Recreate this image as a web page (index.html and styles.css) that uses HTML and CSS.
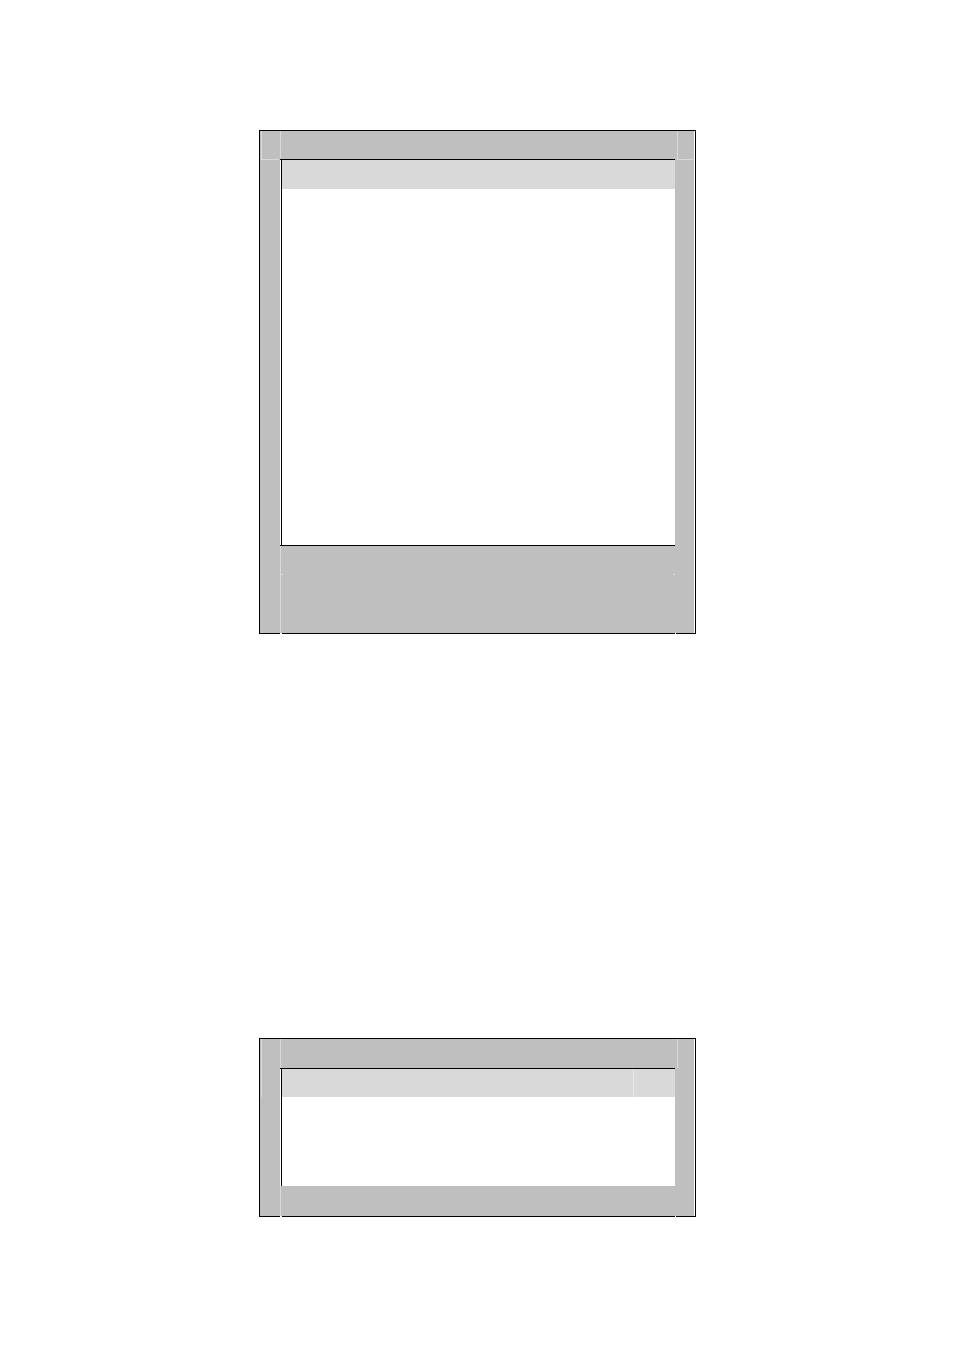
FILE: index.html
```
<!DOCTYPE html>
<html lang="en">
<head>
    <meta charset="UTF-8">
    <meta name="viewport" content="width=device-width, initial-scale=1.0">
    <title>Windows</title>
    <link rel="stylesheet" href="styles.css">
</head>
<body>
    <main class="page">
        <!-- Large window -->
        <section class="window window-large">
            <div class="corner corner-left"></div>
            <div class="title"></div>
            <div class="corner corner-right"></div>
            <div class="screen">
                <div class="screen-header"></div>
                <div class="screen-body"></div>
            </div>
            <div class="footer"></div>
        </section>

        <!-- Small window -->
        <section class="window window-small">
            <div class="corner corner-left"></div>
            <div class="title"></div>
            <div class="corner corner-right"></div>
            <div class="screen">
                <div class="screen-header">
                    <div class="header-cell"></div>
                </div>
                <div class="screen-body"></div>
            </div>
            <div class="footer"></div>
        </section>
    </main>
</body>
</html>
```
FILE: styles.css
```
* {
    margin: 0;
    padding: 0;
    box-sizing: border-box;
}

body {
    background-color: #ffffff;
}

.page {
    display: flex;
    flex-direction: column;
    align-items: center;
    gap: 404px;
    padding: 130px 0 130px 1px;
}

.window {
    display: grid;
    grid-template-columns: 20px 1fr 19px;
    width: 100%;
    max-width: 437px;
    border: 1px solid #000000;
    background-color: #bfbfbf;
    box-shadow: inset -1px 0 #ffffff;
    padding-right: 1px;
}

.window-large {
    grid-template-rows: 29px auto 88px;
}

.window-small {
    grid-template-rows: 30px auto 30px;
}

/* Corners */
.corner {
    border-left: 1px solid #d9d9d9;
}

.corner-left {
    margin: 0 1px;
}

.corner-right {
    margin: 0 1px 0 2px;
}

.window-large .corner {
    border-bottom: 1px solid #d9d9d9;
}

.window-small .corner-left {
    grid-row: 1 / 3;
    grid-column: 1;
    margin-bottom: 89px;
}

.window-small .corner-right {
    margin-bottom: 1px;
}

.title {
    grid-column: 2;
    box-shadow: inset 0 -1px #000000, inset 1px 0 #d9d9d9;
}

/* Screen */
.screen {
    grid-column: 2;
    border-left: 1px solid #ffffff;
    background-color: #ffffff;
}

.screen-header {
    display: flex;
    justify-content: flex-end;
    height: 29px;
    border-left: 1px solid #000000;
    background-color: #d9d9d9;
}

.screen-body {
    height: 356px;
    border-left: 1px solid #000000;
}

.window-small .screen-header {
    height: 28px;
}

.window-small .screen-body {
    height: 89px;
}

.header-cell {
    width: 42px;
    border-left: 1px solid #e6e6e6;
}

/* Footer */
.footer {
    position: relative;
    grid-column: 2;
    box-shadow: inset 1px 0 #d9d9d9;
}

.window-large .footer {
    box-shadow: inset 0 1px #000000, inset 1px 0 #d9d9d9;
    background: linear-gradient(#d9d9d9, #d9d9d9) 0 29px / 3px 1px no-repeat,
                linear-gradient(#d9d9d9, #d9d9d9) 100% 29px / 2px 1px no-repeat;
}

/* Breaks in the bottom border */
.footer::before,
.footer::after {
    content: "";
    position: absolute;
    bottom: -1px;
    height: 1px;
    background-color: #ffffff;
}

.footer::before {
    left: 0;
    width: 2px;
}

.footer::after {
    right: -1px;
    width: 1px;
}
```
